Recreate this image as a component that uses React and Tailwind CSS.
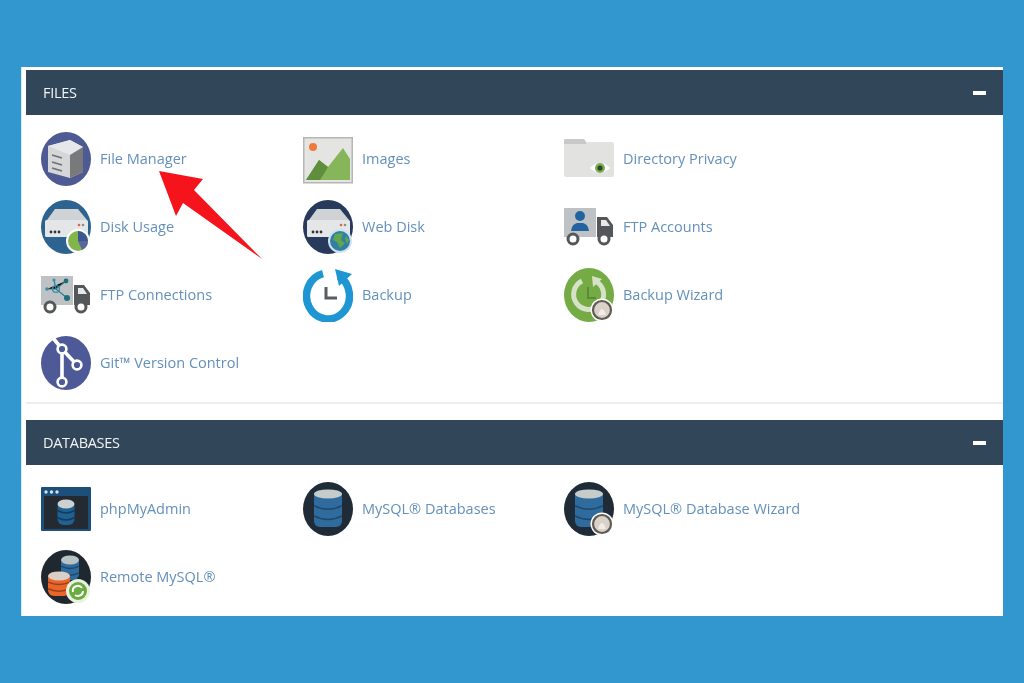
const ServerBody = () => (
  <>
    <path d="M6 20 L14 9 H37 L46 20 Z" fill="#cfd3d6" />
    <rect x="4" y="20" width="43" height="17" rx="1.5" fill="#e4e6e8" />
    <circle cx="10" cy="32" r="1.4" fill="#333" />
    <circle cx="14" cy="32" r="1.4" fill="#333" />
    <circle cx="18" cy="32" r="1.4" fill="#333" />
    <circle cx="38" cy="25" r="1.3" fill="#d9694a" />
    <circle cx="42" cy="25" r="1.3" fill="#8c8c8c" />
  </>
);

const Cylinder = ({ x = 25, y = 10, w = 24, h = 34, top = '#c5ccc9', body = '#2f6c9d', line = '#1e4769' }) => (
  <>
    <rect x={x - w / 2} y={y} width={w} height={h} rx="6" fill={body} />
    <ellipse cx={x} cy={y + 4} rx={w / 2} ry="4.5" fill={top} />
    <path d={`M${x - w / 2} ${y + h * 0.42} Q${x} ${y + h * 0.62} ${x + w / 2} ${y + h * 0.42}`} stroke={line} strokeWidth="1.5" fill="none" />
    <path d={`M${x - w / 2} ${y + h * 0.7} Q${x} ${y + h * 0.9} ${x + w / 2} ${y + h * 0.7}`} stroke={line} strokeWidth="1.5" fill="none" />
  </>
);

const Truck = ({ children }) => (
  <>
    <rect x="0" y="8" width="32" height="29" fill="#bfc2c4" />
    <path d="M33 17 H43 L49 25 V37 H33 Z" fill="#54575a" />
    <path d="M37 20 H42 L46 26 H37 Z" fill="#e8e8e8" />
    <circle cx="9" cy="39" r="5" fill="#fff" stroke="#54575a" strokeWidth="3" />
    <circle cx="40" cy="39" r="5" fill="#fff" stroke="#54575a" strokeWidth="3" />
    {children}
  </>
);

const Lock = () => (
  <>
    <circle cx="38" cy="42" r="11.5" fill="#fff" />
    <circle cx="38" cy="42" r="9" fill="#d8d2c8" stroke="#5f5a52" strokeWidth="2.2" />
    <path d="M34 47 Q38 35 42 47 Z" fill="#f1ede6" />
  </>
);

const icons = {
  fileManager: (
    <>
      <ellipse cx="25" cy="27" rx="25" ry="27" fill="#4e5a94" />
      <path d="M7 14 L29 8 L42 15 V40 L29 46 L7 40 Z" fill="#d4d6d8" />
      <path d="M7 14 L29 23 L42 15 L29 8 Z" fill="#e6e7e8" />
      <path d="M29 23 L42 15 V40 L29 46 Z" fill="#77797b" />
      <path d="M11 23 L21 26 M11 30 L21 33 M11 36 L21 39" stroke="#6f7173" strokeWidth="1.8" />
    </>
  ),
  diskUsage: (
    <>
      <ellipse cx="25" cy="27" rx="25" ry="27" fill="#2c6390" />
      <ServerBody />
      <circle cx="37" cy="41" r="12" fill="#fff" />
      <circle cx="37" cy="41" r="10" fill="#82b54b" />
      <path d="M37 41 V31 A10 10 0 0 1 47 41 Z" fill="#3d5790" />
      <path d="M37 41 H47 A10 10 0 0 1 41 50 Z" fill="#59689c" />
    </>
  ),
  ftpConnections: (
    <Truck>
      <g stroke="#2f7c90" strokeWidth="1.2">
        <path d="M6 21 L15 21 L25 13 M15 21 L26 30 M15 21 L13 12" />
      </g>
      <circle cx="15" cy="21" r="3.4" fill="none" stroke="#3d8ea3" strokeWidth="1.4" />
      <circle cx="25" cy="13" r="2.4" fill="#1d6f7c" />
      <circle cx="26" cy="30" r="3" fill="#1d6f7c" />
      <circle cx="6" cy="21" r="1.8" fill="#3d8ea3" />
      <circle cx="13" cy="12" r="1.6" fill="#3d8ea3" />
    </Truck>
  ),
  git: (
    <>
      <ellipse cx="25" cy="27" rx="25" ry="27" fill="#4e5a98" />
      <path d="M12 2 L21 13 V46 M21 13 L36 29" stroke="#fff" strokeWidth="3.6" fill="none" />
      <circle cx="21" cy="13" r="4.4" fill="#4e5a98" stroke="#fff" strokeWidth="2.6" />
      <circle cx="36" cy="29" r="4.4" fill="#4e5a98" stroke="#fff" strokeWidth="2.6" />
      <circle cx="21" cy="46" r="4.4" fill="#4e5a98" stroke="#fff" strokeWidth="2.6" />
    </>
  ),
  images: (
    <>
      <rect x="0.75" y="5.75" width="48.5" height="45" fill="#e4e4e3" stroke="#b5b7b3" strokeWidth="1.5" />
      <circle cx="10" cy="15" r="4" fill="#ee7b3c" />
      <path d="M3 48 L16 28 L25 35 L40 16 L47 27 V48 Z" fill="#86b55a" />
      <path d="M3 48 L16 28 L25 35 L17 48 Z" fill="#5f8f3c" />
    </>
  ),
  webDisk: (
    <>
      <ellipse cx="25" cy="27" rx="25" ry="27" fill="#273a5c" />
      <ServerBody />
      <circle cx="37" cy="41" r="12" fill="#cfe3ee" />
      <circle cx="37" cy="41" r="10" fill="#2f7fa8" />
      <path d="M32 34 L40 33 L38 40 L42 43 L37 48 L34 42 L30 40 Z" fill="#63a64a" />
      <path d="M43 36 L46 40 L44 44 L42 39 Z" fill="#63a64a" />
    </>
  ),
  backup: (
    <>
      <path d="M20 5.6 A21.5 23 0 1 0 36 8.2" fill="none" stroke="#1e96d3" strokeWidth="7.5" />
      <path d="M32 1 L49 6 L36 18 Z" fill="#1e96d3" />
      <path d="M23 19 V30 H34" fill="none" stroke="#5a5d60" strokeWidth="3" />
    </>
  ),
  directoryPrivacy: (
    <>
      <path d="M0 9 Q0 7 2 7 H20 L22 10 H48 Q50 10 50 12 V43 Q50 45 48 45 H2 Q0 45 0 43 Z" fill="#e2e2e1" />
      <path d="M0 9 Q0 7 2 7 H20 L22 10 V12 H0 Z" fill="#c8c8c7" />
      <path d="M26 36 Q36 26 46 36 Q36 45 26 36 Z" fill="#fff" />
      <circle cx="36" cy="36" r="5" fill="#7bb04f" />
      <circle cx="36" cy="36" r="2.6" fill="#33402a" />
    </>
  ),
  ftpAccounts: (
    <Truck>
      <circle cx="16" cy="16" r="5" fill="#22639f" />
      <path d="M7 31 Q8 24 13 23 H19 Q24 24 25 31 Z" fill="#22639f" />
    </Truck>
  ),
  backupWizard: (
    <>
      <ellipse cx="25" cy="27" rx="25" ry="27" fill="#74ab45" />
      <path d="M18 13 A15 15 0 1 0 33 14" fill="none" stroke="#d5e2c6" strokeWidth="5" />
      <path d="M28 8 L38 11 L29 19 Z" fill="#d5e2c6" />
      <path d="M24 19 V30 H32" fill="none" stroke="#5b8a38" strokeWidth="2" />
      <Lock />
    </>
  ),
  phpMyAdmin: (
    <>
      <rect x="0" y="5" width="50" height="44" rx="1" fill="#1c4f79" />
      <rect x="3" y="14" width="44" height="33" fill="#232a31" />
      <circle cx="5" cy="10" r="1.7" fill="#cfe4f2" />
      <circle cx="10.5" cy="10" r="1.7" fill="#cfe4f2" />
      <circle cx="16" cy="10" r="1.7" fill="#cfe4f2" />
      <Cylinder y={18} w={17} h={25} top="#cdd2d0" body="#1f6193" line="#173a58" />
    </>
  ),
  remoteMysql: (
    <>
      <ellipse cx="25" cy="27" rx="25" ry="27" fill="#20282f" />
      <Cylinder x={29} y={6} w={18} h={24} top="#b9c3c6" body="#2f6c9d" />
      <Cylinder x={18} y={22} w={22} h={24} top="#d8cfc6" body="#e8662c" line="#9c3f18" />
      <circle cx="37" cy="41" r="12" fill="#e9f2df" />
      <circle cx="37" cy="41" r="9" fill="#6cab3f" />
      <path d="M32 42 A5 5 0 0 1 41 38 M42 41 A5 5 0 0 1 34 45" stroke="#fff" strokeWidth="2" fill="none" />
    </>
  ),
  mysql: (
    <>
      <ellipse cx="25" cy="27" rx="25" ry="27" fill="#1f2b36" />
      <Cylinder y={8} w={28} h={37} />
    </>
  ),
  mysqlWizard: (
    <>
      <ellipse cx="25" cy="27" rx="25" ry="27" fill="#1f2b36" />
      <Cylinder y={8} w={28} h={37} />
      <Lock />
    </>
  ),
};

const Tool = ({ icon, label }) => (
  <div className="flex h-[68px] items-center gap-[9px]">
    <svg className="h-[54px] w-[50px] shrink-0" viewBox="0 0 50 54">
      {icons[icon]}
    </svg>
    <span className="pt-[1px] text-[14.5px] leading-none text-[#6490bb] blur-[0.5px]">{label}</span>
  </div>
);

const Section = ({ title, children, className }) => (
  <section className={className}>
    <div className="flex h-[45px] items-center justify-between bg-[#324659] px-[17px]">
      <h2 className="text-[14.5px] tracking-[-0.3px] text-[#f1f4f6] blur-[0.4px]">{title}</h2>
      <div className="h-[4px] w-[13px] bg-white" />
    </div>
    <div className="grid grid-cols-[262px_261px_1fr] pl-[15px] pt-[10px]">{children}</div>
  </section>
);

export default function App() {
  return (
    <div className="relative h-[683px] w-full overflow-hidden bg-[#3397cf] pl-[21px] pt-[67px] font-['Open_Sans',sans-serif]">
      <div className="h-[549px] w-[982px] border-l-[1px] border-[#d8eef8] bg-white pl-[4px] pt-[3px]">
        <Section title="FILES" className="h-[334px] border-b-2 border-[#eeeeee]">
          <Tool icon="fileManager" label="File Manager" />
          <Tool icon="images" label="Images" />
          <Tool icon="directoryPrivacy" label="Directory Privacy" />
          <Tool icon="diskUsage" label="Disk Usage" />
          <Tool icon="webDisk" label="Web Disk" />
          <Tool icon="ftpAccounts" label="FTP Accounts" />
          <Tool icon="ftpConnections" label="FTP Connections" />
          <Tool icon="backup" label="Backup" />
          <Tool icon="backupWizard" label="Backup Wizard" />
          <Tool icon="git" label="Git™ Version Control" />
        </Section>
        <Section title="DATABASES" className="mt-[16px]">
          <Tool icon="phpMyAdmin" label="phpMyAdmin" />
          <Tool icon="mysql" label="MySQL® Databases" />
          <Tool icon="mysqlWizard" label="MySQL® Database Wizard" />
          <Tool icon="remoteMysql" label="Remote MySQL®" />
        </Section>
      </div>

      {/* red arrow annotation */}
      <svg className="absolute left-[150px] top-[165px] h-[100px] w-[120px]" viewBox="150 165 120 100">
        <path d="M159 171 L203 179 L194 190 L262 259 L183 203 L176 216 Z" fill="#f5141c" />
      </svg>
    </div>
  );
}
